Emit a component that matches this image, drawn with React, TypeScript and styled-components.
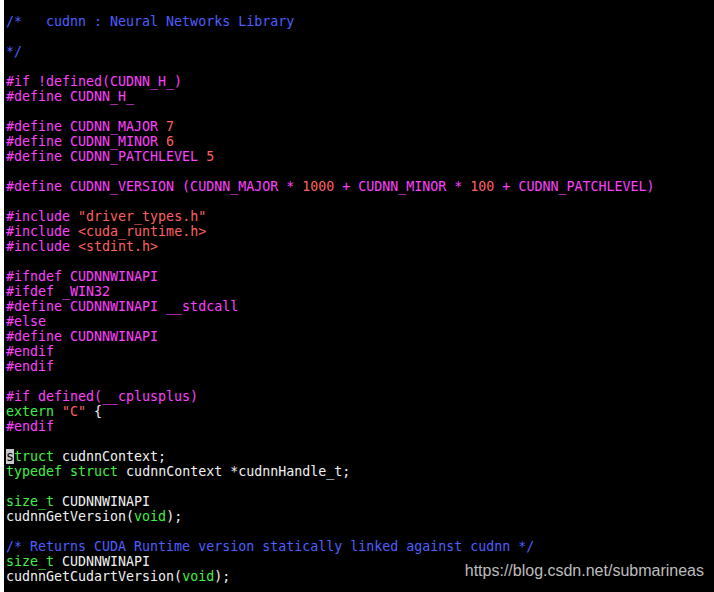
import React from "react";
import styled, { createGlobalStyle } from "styled-components";

type Kind = "pre" | "str" | "num" | "cmt" | "type" | "plain" | "cursor";
type Token = [Kind, string];

const GlobalStyle = createGlobalStyle`
  html,
  body {
    margin: 0;
    padding: 0;
    background: #fff;
  }
`;

const colors: Record<Kind, string> = {
  pre: "#ff40ff",
  str: "#ff6060",
  num: "#ff6060",
  cmt: "#4f5fff",
  type: "#40f040",
  plain: "#f2f2f2",
  cursor: "#000",
};

const Screen = styled.div`
  position: relative;
  margin-left: 4px;
  height: 592px;
  padding: 14px 0 0 2px;
  box-sizing: border-box;
  overflow: hidden;
  background: #000;
`;

const Line = styled.div`
  height: 15px;
  line-height: 15px;
  white-space: pre;
  font-family: "DejaVu Sans Mono", monospace;
  font-size: 13.3px;
  color: #f2f2f2;
`;

const Span = styled.span<{ $kind: Kind }>`
  color: ${(p) => colors[p.$kind]};
  background: ${(p) => (p.$kind === "cursor" ? "#c8c8c8" : "transparent")};
`;

const Watermark = styled.div`
  position: absolute;
  right: 10px;
  bottom: 12px;
  font-family: "Liberation Sans", Arial, sans-serif;
  font-size: 16px;
  color: #bdbdbd;
  text-shadow: 0 0 2px #000;
`;

const P = (s: string): Token => ["pre", s];
const S = (s: string): Token => ["str", s];
const N = (s: string): Token => ["num", s];
const C = (s: string): Token => ["cmt", s];
const T = (s: string): Token => ["type", s];
const X = (s: string): Token => ["plain", s];

const lines: Token[][] = [
  [C("/*   cudnn : Neural Networks Library")],
  [],
  [C("*/")],
  [],
  [P("#if !defined(CUDNN_H_)")],
  [P("#define CUDNN_H_")],
  [],
  [P("#define CUDNN_MAJOR "), N("7")],
  [P("#define CUDNN_MINOR "), N("6")],
  [P("#define CUDNN_PATCHLEVEL "), N("5")],
  [],
  [
    P("#define CUDNN_VERSION (CUDNN_MAJOR * "),
    N("1000"),
    P(" + CUDNN_MINOR * "),
    N("100"),
    P(" + CUDNN_PATCHLEVEL)"),
  ],
  [],
  [P("#include "), S('"driver_types.h"')],
  [P("#include "), S("<cuda_runtime.h>")],
  [P("#include "), S("<stdint.h>")],
  [],
  [P("#ifndef CUDNNWINAPI")],
  [P("#ifdef _WIN32")],
  [P("#define CUDNNWINAPI __stdcall")],
  [P("#else")],
  [P("#define CUDNNWINAPI")],
  [P("#endif")],
  [P("#endif")],
  [],
  [P("#if defined(__cplusplus)")],
  [T("extern"), X(" "), S('"C"'), X(" {")],
  [P("#endif")],
  [],
  [["cursor", "s"], T("truct"), X(" cudnnContext;")],
  [T("typedef"), X(" "), T("struct"), X(" cudnnContext *cudnnHandle_t;")],
  [],
  [T("size_t"), X(" CUDNNWINAPI")],
  [X("cudnnGetVersion("), T("void"), X(");")],
  [],
  [C("/* Returns CUDA Runtime version statically linked against cudnn */")],
  [T("size_t"), X(" CUDNNWINAPI")],
  [X("cudnnGetCudartVersion("), T("void"), X(");")],
  [],
];

export default function App() {
  return (
    <>
      <GlobalStyle />
      <Screen>
        {lines.map((tokens, i) => (
          <Line key={i}>
            {tokens.map(([kind, text], j) => (
              <Span key={j} $kind={kind}>
                {text}
              </Span>
            ))}
          </Line>
        ))}
        <Watermark>https://blog.csdn.net/submarineas</Watermark>
      </Screen>
    </>
  );
}
